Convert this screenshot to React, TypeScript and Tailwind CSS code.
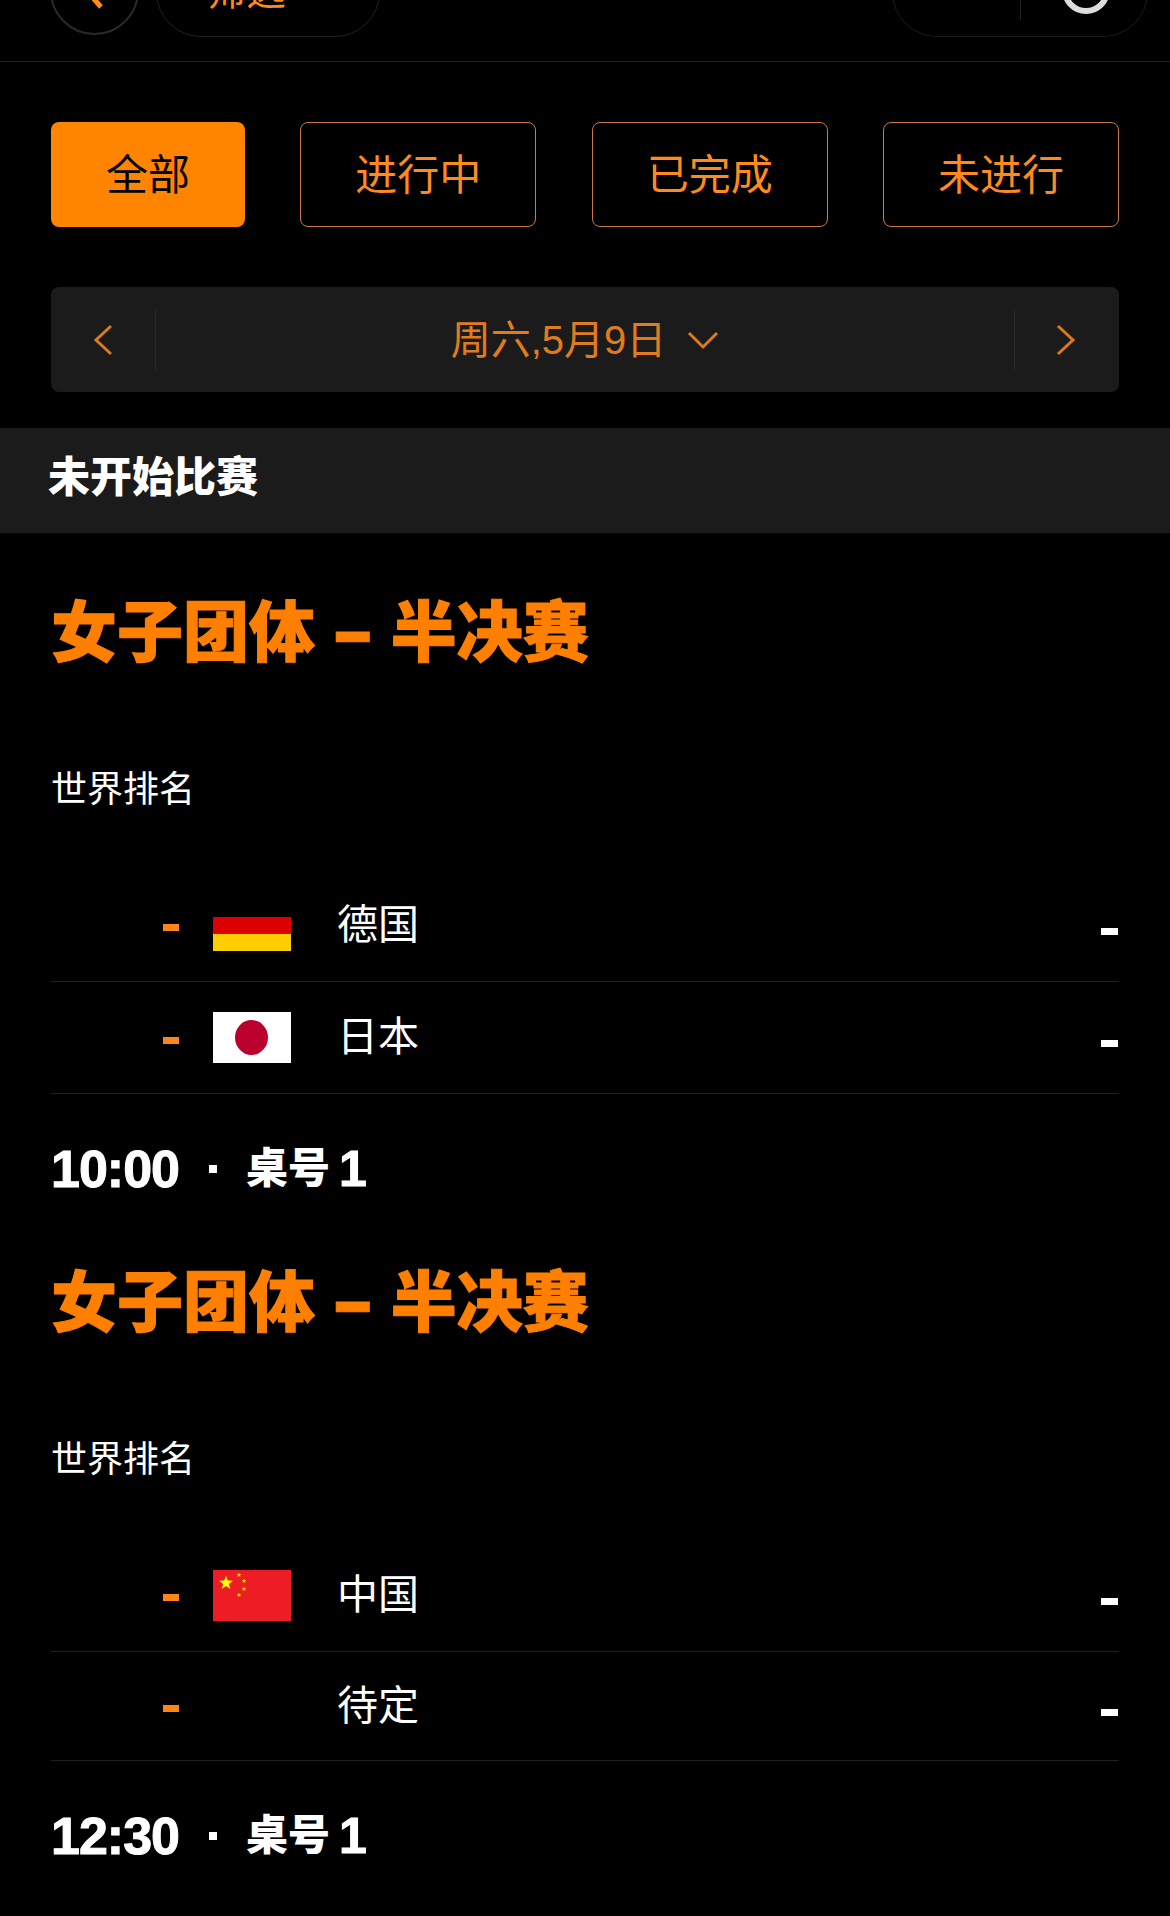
const cjk = "font-['Liberation_Sans','Noto_Sans_CJK_SC',sans-serif]";

function Germany() {
  return (
    <svg width="78" height="51" viewBox="0 0 78 51" className="shrink-0">
      <rect width="78" height="17" fill="#000" />
      <rect y="17" width="78" height="17" fill="#dd0000" />
      <rect y="34" width="78" height="17" fill="#ffce00" />
    </svg>
  );
}
function Japan() {
  return (
    <svg width="78" height="51" viewBox="0 0 78 51" className="shrink-0">
      <rect width="78" height="51" fill="#fff" />
      <ellipse cx="38.5" cy="25.5" rx="16.5" ry="17.5" fill="#bc002d" />
    </svg>
  );
}
function star(cx: number, cy: number, r: number) {
  const pts: string[] = [];
  for (let i = 0; i < 10; i++) {
    const a = -Math.PI / 2 + (i * Math.PI) / 5;
    const rr = i % 2 === 0 ? r : r * 0.4;
    pts.push(`${cx + rr * Math.cos(a)},${cy + rr * Math.sin(a)}`);
  }
  return pts.join(" ");
}
function China() {
  return (
    <svg width="78" height="51" viewBox="0 0 78 51" className="shrink-0">
      <rect width="78" height="51" fill="#ee1c25" />
      <polygon points={star(13, 13, 7.5)} fill="#ffff00" />
      <polygon points={star(26, 5, 2.6)} fill="#ffe000" />
      <polygon points={star(31, 11, 2.6)} fill="#ffe000" />
      <polygon points={star(31, 19, 2.6)} fill="#ffe000" />
      <polygon points={star(26, 25, 2.6)} fill="#ffe000" />
    </svg>
  );
}

function Row({ flag, name, h }: { flag?: React.ReactNode; name: string; h: string }) {
  return (
    <div className={`flex items-center border-b border-[#1f1f1f] ${h}`}>
      <div className="w-[162px] pl-[112px] flex shrink-0 pt-[5px]">
        <div className="w-[16px] h-[7px] bg-[#ff8419]" />
      </div>
      <div className="w-[78px] shrink-0 h-[51px]">{flag}</div>
      <div className="ml-[46px] text-[41px] leading-[48px] font-normal text-white -mt-[1px] flex-1">{name}</div>
      <div className="w-[17px] h-[7px] bg-white mr-[1px] mt-[12px]" />
    </div>
  );
}

function Match({ a, b, time, second }: { a: [React.ReactNode, string]; b: [React.ReactNode | undefined, string]; time: string; second?: boolean }) {
  return (
    <div className="px-[51px]">
      <div className="text-[66px] leading-[80px] font-black text-[#ff8000] h-[80px] whitespace-nowrap [-webkit-text-stroke:1px_#ff8000]">
        女子团体 <span className="font-['Inter',sans-serif] mx-[3px]">–</span> 半决赛
      </div>
      <div className="mt-[96px] text-[36px] leading-[44px] font-normal text-white h-[44px]">世界排名</div>
      <div className="mt-[57px]">
        <Row flag={a[0]} name={a[1]} h="h-[113px]" />
        <Row flag={b[0]} name={b[1]} h={second ? "h-[109px]" : "h-[112px]"} />
      </div>
      <div className="mt-[43px] h-[64px] flex items-center text-white font-bold">
        <span className="text-[52px] leading-[64px] tracking-[-1px] [-webkit-text-stroke:1px_#ffffff]">{time}</span>
        <span className="w-[8px] h-[8px] bg-white ml-[30px] mr-[29px]" />
        <span className="text-[42px] leading-[64px] font-black">桌号</span>
        <span className="text-[50px] leading-[64px] ml-[9px] [-webkit-text-stroke:1px_#ffffff]">1</span>
      </div>
    </div>
  );
}

function Tab({ label, active, w }: { label: string; active?: boolean; w: string }) {
  return (
    <div
      className={`${w} h-[105px] rounded-[8px] flex items-center justify-center text-[42px] font-normal pt-[2px] ${
        active ? "bg-[#ff8400] text-black" : "border border-[#c97a45] text-[#ff8a1e]"
      }`}
    >
      {label}
    </div>
  );
}

export default function App() {
  return (
    <div className={`w-[1170px] h-[1916px] overflow-hidden bg-black ${cjk}`}>
      {/* top bar, scrolled partly out of view */}
      <div className="h-[62px] border-b border-[#222222] overflow-hidden flex items-end pb-[24px] pl-[50px] pr-[22px]">
        <div className="w-[89px] h-[89px] rounded-full border-[2px] border-[#2a2a2a] shrink-0 mb-[2px] flex items-center justify-center">
          <svg width="24" height="40" viewBox="0 0 24 40" fill="none" className="mr-[4px]">
            <path d="M20 4 L6 20 L20 36" stroke="#ff8a1e" strokeWidth="5" />
          </svg>
        </div>
        <div className="ml-[17px] w-[224px] h-[90px] rounded-[45px] border border-[#222222] shrink-0 flex items-end pl-[49px] pb-[22px]">
          <span className="text-[40px] leading-[46px] text-[#ff8a1e] font-normal">筛选</span>
        </div>
        <div className="ml-auto w-[256px] h-[90px] rounded-[45px] border border-[#1c1c1c] shrink-0 flex items-end pb-[16px]">
          <div className="w-[1px] h-[60px] bg-[#222222] ml-[127px]" />
          <div className="w-[48px] h-[48px] rounded-full border-[6px] border-[#dddddd] ml-[41px] mb-[6px]" />
        </div>
      </div>

      {/* filter tabs */}
      <div className="mt-[60px] mx-[51px] flex justify-between">
        <Tab label="全部" active w="w-[194px]" />
        <Tab label="进行中" w="w-[236px]" />
        <Tab label="已完成" w="w-[236px]" />
        <Tab label="未进行" w="w-[236px]" />
      </div>

      {/* date selector */}
      <div className="mt-[60px] mx-[51px] h-[105px] rounded-[8px] bg-[#1b1b1b] flex items-center">
        <div className="w-[105px] h-[60px] border-r border-[#2a2a2a] flex items-center pl-[42px] shrink-0">
          <svg width="20" height="32" viewBox="0 0 20 32" fill="none">
            <path d="M18 2 L3 16 L18 30" stroke="#d97a1f" strokeWidth="3" />
          </svg>
        </div>
        <div className="flex-1 flex items-center justify-center">
          <span className="text-[40px] leading-[48px] font-normal text-[#e07c20]">周六,5月9日</span>
          <svg width="32" height="20" viewBox="0 0 32 20" fill="none" className="ml-[21px]">
            <path d="M2 3 L16 17 L30 3" stroke="#d97a1f" strokeWidth="3" />
          </svg>
        </div>
        <div className="w-[105px] h-[60px] border-l border-[#2a2a2a] flex items-center justify-end pr-[43px] shrink-0">
          <svg width="20" height="32" viewBox="0 0 20 32" fill="none">
            <path d="M2 2 L17 16 L2 30" stroke="#d97a1f" strokeWidth="3" />
          </svg>
        </div>
      </div>

      {/* section heading */}
      <div className="mt-[36px] h-[105px] bg-[#1b1b1b] flex items-center pl-[48px] pb-[6px] text-[42px] font-black text-white">未开始比赛</div>

      <div className="pt-[59px]">
        <Match a={[<Germany />, "德国"]} b={[<Japan />, "日本"]} time="10:00" />
      </div>
      <div className="pt-[61px]">
        <Match a={[<China />, "中国"]} b={[undefined, "待定"]} time="12:30" second />
      </div>
    </div>
  );
}
